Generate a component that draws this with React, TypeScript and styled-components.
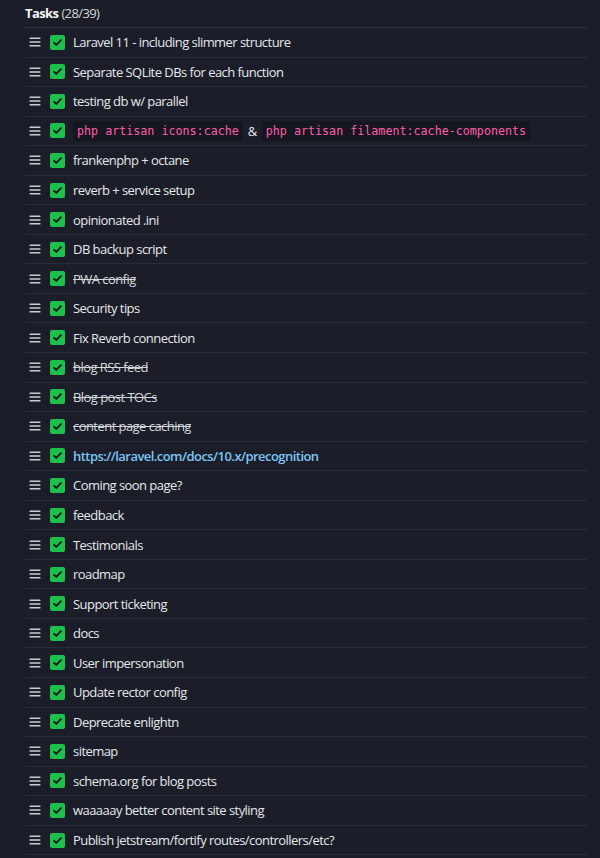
import React from "react";
import styled, { createGlobalStyle } from "styled-components";

type Task = {
    text: string;
    done?: boolean;
    kind?: "text" | "code" | "link";
};

const tasks: Task[] = [
    { text: "Laravel 11 - including slimmer structure" },
    { text: "Separate SQLite DBs for each function" },
    { text: "testing db w/ parallel" },
    { text: "", kind: "code" },
    { text: "frankenphp + octane" },
    { text: "reverb + service setup" },
    { text: "opinionated .ini" },
    { text: "DB backup script" },
    { text: "PWA config", done: true },
    { text: "Security tips" },
    { text: "Fix Reverb connection" },
    { text: "blog RSS feed", done: true },
    { text: "Blog post TOCs", done: true },
    { text: "content page caching", done: true },
    { text: "https://laravel.com/docs/10.x/precognition", kind: "link" },
    { text: "Coming soon page?" },
    { text: "feedback" },
    { text: "Testimonials" },
    { text: "roadmap" },
    { text: "Support ticketing" },
    { text: "docs" },
    { text: "User impersonation" },
    { text: "Update rector config" },
    { text: "Deprecate enlightn" },
    { text: "sitemap" },
    { text: "schema.org for blog posts" },
    { text: "waaaaay better content site styling" },
    { text: "Publish jetstream/fortify routes/controllers/etc?" },
];

const GlobalStyle = createGlobalStyle`
    html, body {
        margin: 0;
        padding: 0;
        background: #1b1e28;
    }
    body {
        font-family: "Open Sans", "Noto Sans", sans-serif;
        -webkit-font-smoothing: antialiased;
    }
`

const DragHandle = function() {
    return (
        <Handle viewBox="0 0 12 10" aria-hidden>
            <rect x="0.5" y="0.5" width="11" height="1.6" rx="0.6" />
            <rect x="0.5" y="4.2" width="11" height="1.6" rx="0.6" />
            <rect x="0.5" y="7.9" width="11" height="1.6" rx="0.6" />
        </Handle>
    )
}

const CheckBox = function() {
    return (
        <Check>
            <svg viewBox="0 0 16 16" width="11" height="11" aria-hidden>
                <path d="M3 8.4 L6.3 11.6 L13 4.6" fill="none" stroke="#0f1a12" strokeWidth="2.6" strokeLinecap="round" strokeLinejoin="round" />
            </svg>
        </Check>
    )
}

const TaskRow = function(props: { task: Task }) {
    const { task } = props;
    let content: React.ReactNode = task.text;
    if (task.kind === "code") {
        content = (
            <>
                <Code>php artisan icons:cache</Code>
                <Amp>&amp;</Amp>
                <Code>php artisan filament:cache-components</Code>
            </>
        )
    } else if (task.kind === "link") {
        content = <Link href="#">{task.text}</Link>
    }

    return (
        <Row>
            <DragHandle />
            <CheckBox />
            <Label $done={!!task.done}>{content}</Label>
        </Row>
    )
}

const App = function() {
    return (
        <Page>
            <GlobalStyle />
            <Header>
                <Title>Tasks</Title>
                <Count>(28/39)</Count>
            </Header>
            <List>
                {tasks.map((t, i) => <TaskRow key={i} task={t} />)}
            </List>
        </Page>
    )
}

export default App;

const Page = styled.div`
    width: 562px;
    padding-left: 25px;
    min-height: 858px;
    box-sizing: content-box;
`

const Header = styled.div`
    height: 28px;
    display: flex;
    align-items: center;
    gap: 3px;
    border-bottom: 1px solid #2c3342;
    box-sizing: border-box;
    padding-bottom: 1px;
    letter-spacing: -0.6px;
`

const Title = styled.span`
    font-size: 13px;
    font-weight: 700;
    color: #f3f4f6;
`

const Count = styled.span`
    font-size: 13px;
    font-weight: 400;
    color: #d1d5db;
`

const List = styled.ul`
    list-style: none;
    margin: 0;
    padding: 0;
`

const Row = styled.li`
    height: 29.55px;
    box-sizing: border-box;
    display: flex;
    align-items: center;
    padding-left: 4px;
    border-bottom: 1px solid #272d3a;
`

const Handle = styled.svg`
    width: 12px;
    height: 10px;
    fill: #c9cbd0;
    flex-shrink: 0;
`

const Check = styled.span`
    width: 15px;
    height: 15px;
    margin-left: 9px;
    border-radius: 2px;
    background: #1fbf4e;
    display: flex;
    align-items: center;
    justify-content: center;
    flex-shrink: 0;
`

const Label = styled.span<{ $done: boolean }>`
    margin-left: 8px;
    font-size: 13px;
    letter-spacing: -0.55px;
    color: ${props => props.$done ? "#d4d6db" : "#e5e7eb"};
    text-decoration: ${props => props.$done ? "line-through" : "none"};
    white-space: nowrap;
    display: flex;
    align-items: center;
`

const Code = styled.code`
    font-family: "DejaVu Sans Mono", "Liberation Mono", monospace;
    font-size: 11.7px;
    letter-spacing: 0;
    color: #ff5ea8;
    background: #141720;
    border-radius: 4px;
    padding: 3px 4px;
`

const Amp = styled.span`
    margin: 0 5px;
    color: #e5e7eb;
`

const Link = styled.a`
    color: #7cc4f4;
    font-weight: 600;
    text-decoration: none;
`
